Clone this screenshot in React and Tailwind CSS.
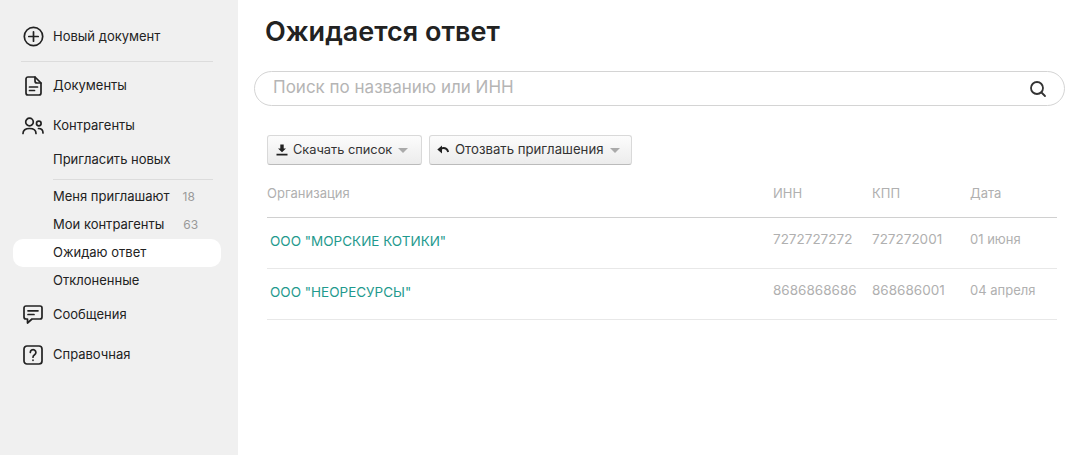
import React from 'react';

const rows = [
  { name: 'ООО "МОРСКИЕ КОТИКИ"', inn: '7272727272', kpp: '727272001', date: '01 июня' },
  { name: 'ООО "НЕОРЕСУРСЫ"', inn: '8686868686', kpp: '868686001', date: '04 апреля' },
];

const Caret = () => (
  <span className="ml-[6px] w-0 h-0 border-x-[5.5px] border-x-transparent border-t-[5px] border-t-[#aaaaaa]" />
);

const NavItem = ({ icon, children, className = '' }) => (
  <div className={`flex items-center h-7 text-[13px] text-[#222222] ${className}`}>
    <span className="w-6 mr-2 flex justify-center">{icon}</span>
    {children}
  </div>
);

const SubItem = ({ children, count, countClass = 'ml-[13px]', active, className = '' }) => (
  <div className={`flex items-center h-7 -ml-2 -mr-2 pl-10 rounded-[10px] text-[13px] text-[#222222] ${active ? 'bg-white' : ''} ${className}`}>
    {children}
    {count && <span className={`${countClass} text-[12px] text-[#999999]`}>{count}</span>}
  </div>
);

export default function App() {
  return (
    <div className="flex w-[1075px] h-[455px] overflow-hidden bg-white font-['Inter',sans-serif]">
      <aside className="w-[238px] shrink-0 bg-[#f0f0f0] pl-[21px] pr-[25px] pt-[23px]">
        <NavItem
          icon={
            <svg width="21" height="21" viewBox="0 0 21 21" fill="none" stroke="#222" strokeWidth="1.7" strokeLinecap="round" className="-translate-y-px">
              <circle cx="10.5" cy="10.5" r="9.2" />
              <path d="M10.5 5.8v9.4M5.8 10.5h9.4" />
            </svg>
          }
        >
          Новый документ
        </NavItem>
        <div className="h-px bg-[#dcdcdc] mt-[10px] mb-[10px]" />
        <NavItem
          icon={
            <svg width="17" height="20" viewBox="0 0 17 20" fill="none" stroke="#222" strokeWidth="1.7" strokeLinecap="round" strokeLinejoin="round">
              <path d="M3 1h7l6 6v10a2 2 0 0 1-2 2H3a2 2 0 0 1-2-2V3a2 2 0 0 1 2-2Z" />
              <path d="M10 1v4a2 2 0 0 0 2 2h4M4.5 11h8M4.5 14.5h5" />
            </svg>
          }
        >
          Документы
        </NavItem>
        <NavItem
          className="mt-3"
          icon={
            <svg width="22" height="18" viewBox="0 0 22 18" fill="none" stroke="#222" strokeWidth="1.7" strokeLinecap="round">
              <circle cx="7.5" cy="5" r="3.8" />
              <path d="M1 16.5c0-3.2 2.4-5 6.5-5s6.5 1.8 6.5 5" />
              <circle cx="16.8" cy="6.5" r="2.3" />
              <path d="M16.5 11.5c2.8 0 4.5 1.5 4.5 4.5" />
            </svg>
          }
        >
          Контрагенты
        </NavItem>
        <SubItem className="mt-[6px]">Пригласить новых</SubItem>
        <div className="h-px bg-[#dcdcdc] ml-8 mt-[5px] mb-[3px]" />
        <SubItem count="18">Меня приглашают</SubItem>
        <SubItem count="63" countClass="ml-[19px]">Мои контрагенты</SubItem>
        <SubItem active>Ожидаю ответ</SubItem>
        <SubItem>Отклоненные</SubItem>
        <NavItem
          className="mt-[6px]"
          icon={
            <svg width="20" height="20" viewBox="0 0 20 20" fill="none" stroke="#222" strokeWidth="1.7" strokeLinecap="round" strokeLinejoin="round">
              <path d="M3 1h14a2 2 0 0 1 2 2v9a2 2 0 0 1-2 2H9l-4.5 4v-4H3a2 2 0 0 1-2-2V3a2 2 0 0 1 2-2Z" />
              <path d="M5 5.8h10M5 9.5h6" />
            </svg>
          }
        >
          Сообщения
        </NavItem>
        <NavItem
          className="mt-3"
          icon={
            <svg width="20" height="20" viewBox="0 0 20 20" fill="none" stroke="#222" strokeWidth="1.7" strokeLinecap="round" strokeLinejoin="round">
              <rect x="1" y="1" width="18" height="18" rx="3" />
              <path d="M7.3 7.5a2.8 2.8 0 1 1 4.3 2.3c-1 .7-1.6 1.2-1.6 2.4" />
              <path d="M10 15.2v.1" />
            </svg>
          }
        >
          Справочная
        </NavItem>
      </aside>

      <main className="flex-1 pl-4 pr-[10px] pt-[15px]">
        <h1 className="ml-[11px] h-[34px] leading-[34px] text-[27px] font-semibold text-[#222222]">Ожидается ответ</h1>
        <div className="mt-[22px] flex items-center justify-between h-[35px] border border-[#d4d4d4] rounded-full pl-[18px] pr-[17px]">
          <span className="text-[17px] text-[#b5b5b5] -translate-y-px">Поиск по названию или ИНН</span>
          <svg width="18" height="18" viewBox="0 0 18 18" fill="none" stroke="#333" strokeWidth="1.8" strokeLinecap="round">
            <circle cx="8" cy="8" r="6" />
            <path d="M12.5 12.5 16 16" />
          </svg>
        </div>

        <div className="ml-[13px] mr-[8px]">
          <div className="mt-[29px] flex gap-[7px]">
            <button className="flex items-center h-[30px] w-[155px] pl-[8px] rounded-[3px] border border-[#d9d9d9] border-b-[#bbbbbb] bg-gradient-to-b from-[#fcfcfc] to-[#ececec] text-[12.8px] text-[#333333]">
              <svg width="12" height="12" viewBox="0 0 12 12" fill="#222" className="mr-[5px]">
                <path d="M4.3 0.5h3.4v4H10L6 8.3 2 4.5h2.3zM0.5 9.8h11v1.7H0.5z" />
              </svg>
              Скачать список
              <Caret />
            </button>
            <button className="flex items-center h-[30px] w-[203px] pl-[7px] rounded-[3px] border border-[#d9d9d9] border-b-[#bbbbbb] bg-gradient-to-b from-[#fcfcfc] to-[#ececec] text-[13.2px] text-[#333333]">
              <svg width="12" height="12" viewBox="0 0 12 12" fill="none" className="mr-[6px]">
                <path d="M0.3 5.5 5 1.5v8z" fill="#222" />
                <path d="M4 4.5c3.2-1 6-.2 7.2 3.5" stroke="#222" strokeWidth="2" />
              </svg>
              Отозвать приглашения
              <Caret />
            </button>
          </div>

          <div className="mt-[16px] flex items-center h-[37px] pb-[10px] border-b border-[#d0d0d0] text-[13px] text-[#b0b0b0]">
            <span className="w-[506px]">Организация</span>
            <span className="w-[99px]">ИНН</span>
            <span className="w-[98px]">КПП</span>
            <span>Дата</span>
          </div>

          {rows.map((row) => (
            <div key={row.inn} className="flex items-center h-[51px] pb-[8px] border-b border-[#e8e8e8] text-[#b0b0b0] text-[13.5px]">
              <span className="w-[506px] pl-[3px] pt-[4px] text-[#1f9a8e]">{row.name}</span>
              <span className="w-[99px]">{row.inn}</span>
              <span className="w-[98px]">{row.kpp}</span>
              <span className="pt-[2px] text-[13px]">{row.date}</span>
            </div>
          ))}
        </div>
      </main>
    </div>
  );
}
